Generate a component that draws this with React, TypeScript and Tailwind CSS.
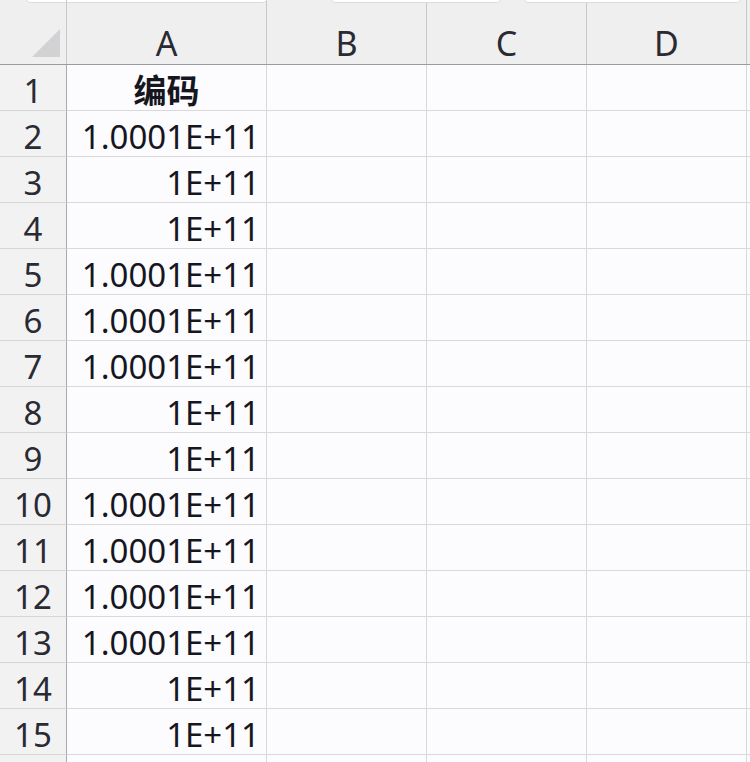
import React from "react";

const rows: string[] = [
  "1.0001E+11",
  "1E+11",
  "1E+11",
  "1.0001E+11",
  "1.0001E+11",
  "1.0001E+11",
  "1E+11",
  "1E+11",
  "1.0001E+11",
  "1.0001E+11",
  "1.0001E+11",
  "1.0001E+11",
  "1E+11",
  "1E+11",
];

const font = { fontFamily: '"Noto Sans", "Noto Sans CJK SC", sans-serif' };

function Row({ n, a, bold }: { n: string; a: string; bold?: boolean }) {
  return (
    <div className="flex h-[46px] shrink-0">
      <div className="w-[67px] shrink-0 border-r border-r-[#a9a9b3] border-b border-b-[#d6d6d6] bg-[#f2f2f3] flex items-end justify-center pb-[3px] leading-none text-[33px] text-[#2a2a33]">
        {n}
      </div>
      <div
        className={
          "w-[200px] shrink-0 border-r border-b border-[#d9d9dc] bg-[#fcfcfe] flex items-end leading-none text-[33px] text-[#16161f] " +
          (bold ? "justify-center font-bold pb-[3px]" : "justify-end pr-[6px] pb-[3px]")
        }
      >
        {a}
      </div>
      <div className="w-[160px] shrink-0 border-r border-b border-[#d9d9dc] bg-[#fcfcfe]" />
      <div className="w-[160px] shrink-0 border-r border-b border-[#d9d9dc] bg-[#fcfcfe]" />
      <div className="w-[160px] shrink-0 border-r border-b border-[#d9d9dc] bg-[#fcfcfe]" />
      <div className="flex-1 border-b border-[#d9d9dc] bg-[#fcfcfe]" />
    </div>
  );
}

function Head({ l }: { l: string }) {
  return (
    <div className="w-[160px] shrink-0 border-r border-[#c8c8cc] flex items-end justify-center pb-[4px] leading-none text-[34px] text-[#2a2a33]">
      {l}
    </div>
  );
}

export default function App() {
  return (
    <div className="w-[750px] h-[762px] overflow-hidden bg-[#fcfcfe] flex flex-col" style={font}>
      <div className="relative flex h-[65px] shrink-0 bg-[#efeff0] border-b border-[#9a9aa0]">
        <div className="absolute left-[25px] top-[-8px] w-[243px] h-[11px] rounded-lg bg-white border border-[#dcdcdc]" />
        <div className="absolute left-[330px] top-[-8px] w-[172px] h-[11px] rounded-lg bg-white border border-[#dcdcdc]" />
        <div className="absolute left-[523px] top-[-8px] w-[219px] h-[11px] rounded-lg bg-white border border-[#dcdcdc]" />
        <div className="w-[67px] shrink-0 border-r border-[#c8c8cc] relative">
          <svg className="absolute left-0 top-0" width="66" height="64" viewBox="0 0 66 64">
            <polygon points="60,29 60,57 32,57" fill="#d2d2d4" />
          </svg>
        </div>
        <div className="w-[200px] shrink-0 border-r border-[#c8c8cc] flex items-end justify-center pb-[4px] leading-none text-[34px] text-[#2a2a33]">A</div>
        <Head l="B" />
        <Head l="C" />
        <Head l="D" />
        <div className="flex-1" />
      </div>
      <Row n="1" a="编码" bold />
      {rows.map((r, i) => (
        <Row key={i} n={String(i + 2)} a={r} />
      ))}
      <Row n="" a="" />
    </div>
  );
}
